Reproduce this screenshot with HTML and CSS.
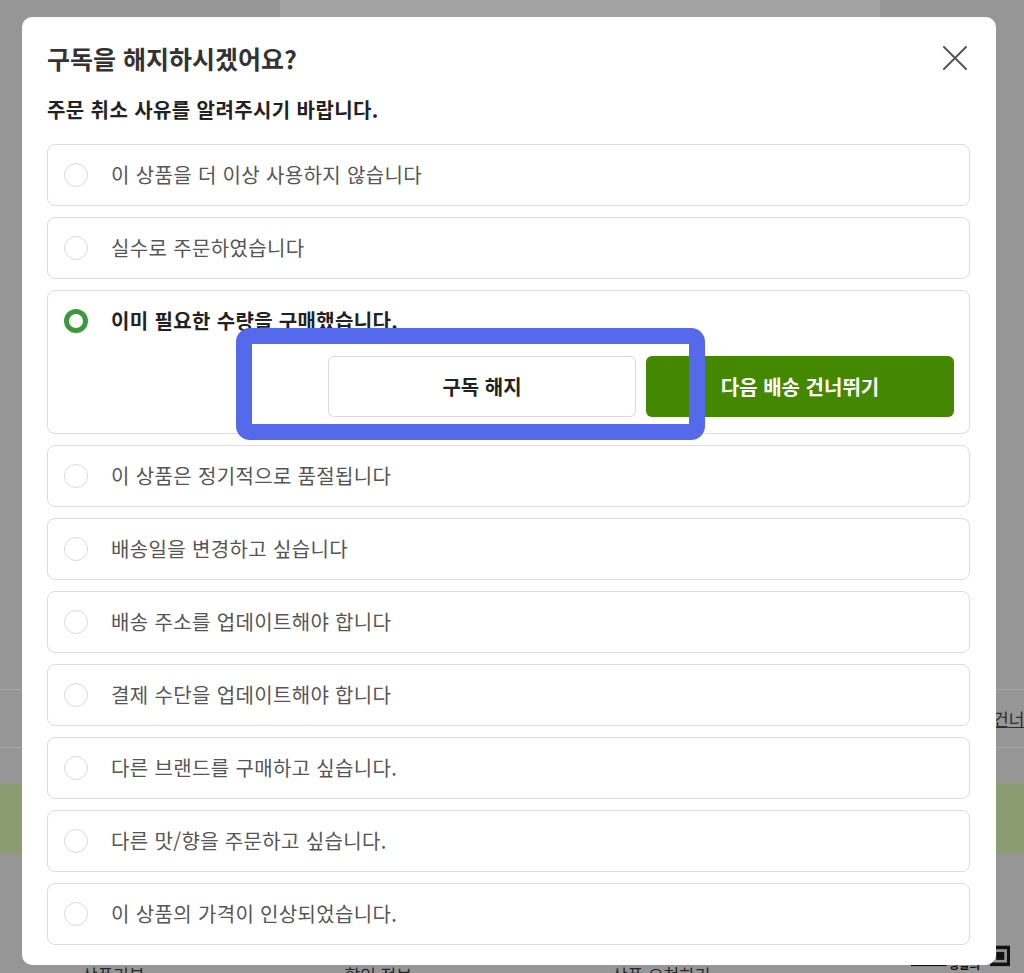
FILE: index.html
```html
<!DOCTYPE html>
<html lang="ko">
<head>
<meta charset="utf-8">
<title>구독 해지</title>
<link rel="stylesheet" href="styles.css">
</head>
<body>
<div class="page">
  <div class="top-strip"></div>
  <div class="skip-row"><span class="skip-link">다음 배송 건너뛰기</span></div>
  <div class="band"></div>
  <div class="links">
    <span class="link">상품리뷰</span>
    <span class="link">할인 정보</span>
    <span class="link">상품 요청하기</span>
    <svg class="logo" width="112" height="30" viewBox="0 0 112 30">
      <rect x="0" y="18" width="40" height="5" fill="#111"/>
      <text x="42" y="26" font-size="13" font-weight="700" fill="#111" font-family="Noto Sans CJK KR, sans-serif">생활의</text>
      <rect x="89" y="0" width="23" height="23" fill="#111"/>
      <rect x="93" y="4" width="15" height="15" fill="#969696"/>
      <rect x="96" y="7" width="9" height="9" fill="#111"/>
    </svg>
  </div>

  <div class="modal">
    <div class="modal-head">
      <h1 class="title">구독을 해지하시겠어요?</h1>
      <svg class="close" width="24" height="24" viewBox="0 0 24 24">
        <path d="M1 1 L23 23 M23 1 L1 23" stroke="#555" stroke-width="2" fill="none" stroke-linecap="round"/>
      </svg>
    </div>
    <p class="subtitle">주문 취소 사유를 알려주시기 바랍니다.</p>
    <div class="options">
      <div class="option"><span class="radio"></span><span class="label">이 상품을 더 이상 사용하지 않습니다</span></div>
      <div class="option"><span class="radio"></span><span class="label">실수로 주문하였습니다</span></div>
      <div class="option expanded">
        <div class="option-head"><span class="radio checked"></span><span class="label strong">이미 필요한 수량을 구매했습니다.</span></div>
        <div class="actions">
          <button class="btn btn-outline">구독 해지</button>
          <button class="btn btn-green">다음 배송 건너뛰기</button>
        </div>
        <div class="highlight"></div>
      </div>
      <div class="option"><span class="radio"></span><span class="label">이 상품은 정기적으로 품절됩니다</span></div>
      <div class="option"><span class="radio"></span><span class="label">배송일을 변경하고 싶습니다</span></div>
      <div class="option"><span class="radio"></span><span class="label">배송 주소를 업데이트해야 합니다</span></div>
      <div class="option"><span class="radio"></span><span class="label">결제 수단을 업데이트해야 합니다</span></div>
      <div class="option"><span class="radio"></span><span class="label">다른 브랜드를 구매하고 싶습니다.</span></div>
      <div class="option"><span class="radio"></span><span class="label">다른 맛/향을 주문하고 싶습니다.</span></div>
      <div class="option"><span class="radio"></span><span class="label">이 상품의 가격이 인상되었습니다.</span></div>
    </div>
  </div>
</div>
</body>
</html>
```

FILE: styles.css
```css
* { box-sizing: border-box; }
html, body { margin: 0; padding: 0; }
body {
  font-family: "Noto Sans CJK KR", "Noto Sans", sans-serif;
  background: #969696;
}
.page {
  position: relative;
  width: 1024px;
  height: 973px;
  overflow: hidden;
  background: #969696;
  display: flex;
  flex-direction: column;
}
.top-strip {
  height: 17px;
  margin: 0 144px 0 280px;
  background: #a2a2a2;
  flex-shrink: 0;
}
.skip-row {
  margin-top: 672px;
  height: 59px;
  border-top: 1px solid #a8a8a8;
  border-bottom: 1px solid #a8a8a8;
  display: flex;
  align-items: center;
  padding-left: 921px;
  flex-shrink: 0;
  white-space: nowrap;
}
.skip-link {
  font-size: 17px;
  color: #2e2e2e;
  text-decoration: underline;
  line-height: 20px;
}
.band {
  margin-top: 36px;
  height: 70px;
  background: #8a9c70;
  flex-shrink: 0;
}
.links {
  margin-top: 90px;
  height: 40px;
  display: flex;
  align-items: flex-start;
  padding-left: 82px;
  gap: 200px;
  flex-shrink: 0;
  white-space: nowrap;
}
.link {
  font-size: 17px;
  line-height: 20px;
  color: #2a2a2a;
  padding-top: 21px;
}
.logo {
  margin-left: auto;
  margin-right: 14px;
}

.modal {
  position: absolute;
  left: 22px;
  top: 17px;
  width: 974px;
  height: 948px;
  background: #fff;
  border-radius: 10px;
  padding: 25px 26px 20px 25px;
}
.modal-head {
  display: flex;
  align-items: center;
  justify-content: space-between;
  height: 32px;
}
.title {
  margin: 0;
  font-size: 25px;
  line-height: 32px;
  font-weight: 700;
  color: #333;
}
.close {
  margin-right: 3px;
}
.subtitle {
  margin: 23px 0 0;
  font-size: 20px;
  line-height: 26px;
  font-weight: 700;
  color: #222;
  letter-spacing: 0.4px;
}
.options {
  margin-top: 21px;
  display: flex;
  flex-direction: column;
  gap: 11px;
}
.option {
  height: 62px;
  border: 1px solid #dcdcdc;
  border-radius: 8px;
  display: flex;
  align-items: center;
  padding-left: 16px;
}
.radio {
  width: 24px;
  height: 24px;
  border-radius: 50%;
  border: 1.5px solid #dadada;
  margin-right: 23px;
  flex-shrink: 0;
  background: #fff;
}
.radio.checked {
  border: 5px solid #3b9a3e;
}
.label {
  font-size: 20px;
  line-height: 26px;
  color: #555;
  letter-spacing: 0.35px;
  white-space: nowrap;
}
.label.strong {
  font-weight: 700;
  color: #222;
}
.option.expanded {
  position: relative;
  height: 144px;
  display: block;
  padding: 0 15px 16px 16px;
}
.option-head {
  height: 60px;
  display: flex;
  align-items: center;
}
.actions {
  margin-top: 5px;
  display: flex;
  justify-content: flex-end;
  gap: 10px;
}
.btn {
  width: 308px;
  height: 61px;
  border-radius: 6px;
  font-family: inherit;
  font-size: 20px;
  font-weight: 700;
  cursor: pointer;
}
.btn-outline {
  background: #fff;
  border: 1px solid #dadada;
  color: #222;
}
.btn-green {
  background: #438800;
  border: none;
  color: #fff;
}
.highlight {
  position: absolute;
  left: 188px;
  top: 37px;
  width: 469px;
  height: 112px;
  border: 16px solid #556aeb;
  border-radius: 14px;
  pointer-events: none;
}
```
